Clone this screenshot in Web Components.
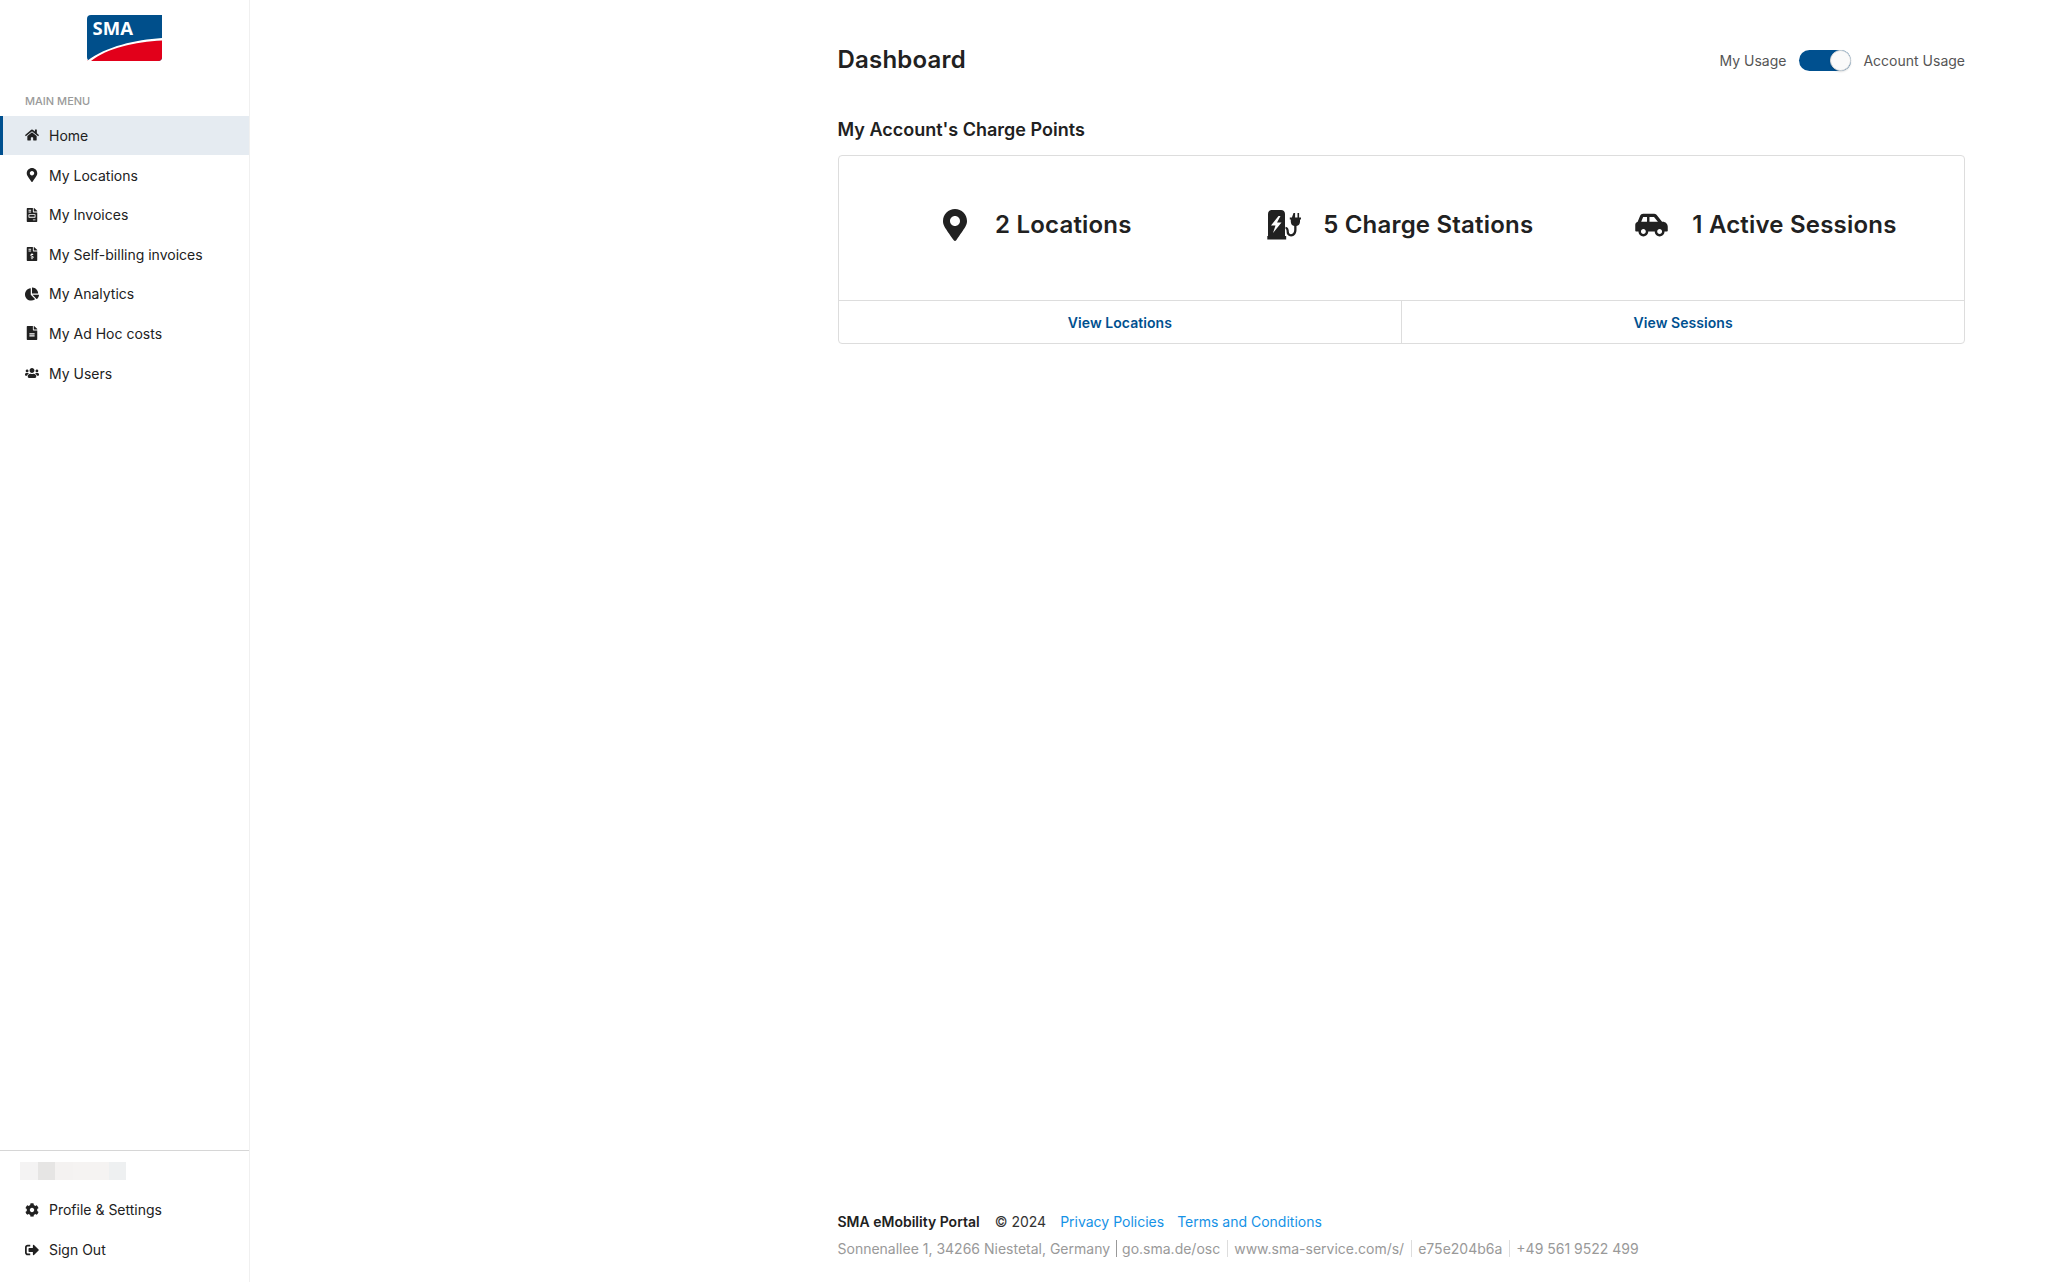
<!DOCTYPE html>
<html lang="en"><head><meta charset="utf-8"><title>Dashboard</title>
<style>
html,body{margin:0;height:100%;background:#fff}
body{font-family:Inter,"Liberation Sans",sans-serif;color:#212121}
</style></head>
<body>
<app-shell>
  <side-nav slot="nav">
    <nav-item icon="home" active>Home</nav-item>
    <nav-item icon="pin">My Locations</nav-item>
    <nav-item icon="invoice">My Invoices</nav-item>
    <nav-item icon="dollar">My Self-billing invoices</nav-item>
    <nav-item icon="pie">My Analytics</nav-item>
    <nav-item icon="adhoc">My Ad Hoc costs</nav-item>
    <nav-item icon="users">My Users</nav-item>
    <nav-item slot="bottom" icon="cog">Profile &amp; Settings</nav-item>
    <nav-item slot="bottom" icon="out">Sign Out</nav-item>
  </side-nav>
  <page-header>Dashboard</page-header>
  <stats-card heading="My Account's Charge Points"></stats-card>
  <page-footer slot="footer"></page-footer>
</app-shell>
<script>
const ICONS={
home:['0 0 576 512','M280.37 148.26L96 300.11V464a16 16 0 0 0 16 16l112.06-.29a16 16 0 0 0 15.92-16V368a16 16 0 0 1 16-16h64a16 16 0 0 1 16 16v95.64a16 16 0 0 0 16 16.05L464 480a16 16 0 0 0 16-16V300L295.67 148.26a12.19 12.19 0 0 0-15.3 0zM571.6 251.47L488 182.56V44.05a12 12 0 0 0-12-12h-56a12 12 0 0 0-12 12v72.61L318.47 43a48 48 0 0 0-61 0L4.34 251.47a12 12 0 0 0-1.6 16.9l25.5 31A12 12 0 0 0 45.15 301l235.22-193.74a12.19 12.19 0 0 1 15.3 0L530.9 301a12 12 0 0 0 16.9-1.6l25.5-31a12 12 0 0 0-1.7-16.93z'],
pin:['0 0 384 512','M172.268 501.67C26.97 291.031 0 262.559 0 192 0 85.961 85.961 0 192 0s192 85.961 192 192c0 70.559-26.97 99.031-172.268 309.67-9.535 13.774-29.93 13.773-39.464 0zM192 272c44.183 0 80-35.817 80-80s-35.817-80-80-80-80 35.817-80 80 35.817 80 80 80z'],
invoice:['0 0 384 512','M288 256H96v64h192v-64zm89-151L279.1 7c-4.5-4.5-10.6-7-17-7H256v128h128v-6.1c0-6.3-2.5-12.4-7-16.9zm-153 31V0H24C10.7 0 0 10.7 0 24v464c0 13.3 10.7 24 24 24h336c13.3 0 24-10.7 24-24V160H248c-13.2 0-24-10.8-24-24zM64 72c0-4.42 3.58-8 8-8h80c4.42 0 8 3.58 8 8v16c0 4.42-3.58 8-8 8H72c-4.42 0-8-3.58-8-8V72zm0 64c0-4.42 3.58-8 8-8h80c4.42 0 8 3.58 8 8v16c0 4.42-3.58 8-8 8H72c-4.42 0-8-3.58-8-8v-16zm256 304c0 4.42-3.58 8-8 8h-80c-4.42 0-8-3.58-8-8v-16c0-4.42 3.58-8 8-8h80c4.42 0 8 3.58 8 8v16zm0-200v96c0 8.84-7.16 16-16 16H80c-8.84 0-16-7.16-16-16v-96c0-8.84 7.16-16 16-16h224c8.84 0 16 7.16 16 16z'],
dollar:['0 0 384 512','M377 105L279.1 7c-4.5-4.5-10.6-7-17-7H256v128h128v-6.1c0-6.3-2.5-12.4-7-16.9zm-153 31V0H24C10.7 0 0 10.7 0 24v464c0 13.3 10.7 24 24 24h336c13.3 0 24-10.7 24-24V160H248c-13.2 0-24-10.8-24-24zM64 72c0-4.42 3.58-8 8-8h80c4.42 0 8 3.58 8 8v16c0 4.42-3.58 8-8 8H72c-4.42 0-8-3.58-8-8V72zm0 80v-16c0-4.42 3.58-8 8-8h80c4.42 0 8 3.58 8 8v16c0 4.42-3.58 8-8 8H72c-4.42 0-8-3.58-8-8zm144 263.88V440c0 4.42-3.58 8-8 8h-16c-4.42 0-8-3.58-8-8v-24.29c-11.29-.58-22.27-4.52-31.37-11.35-3.9-2.93-4.1-8.77-.57-12.14l11.75-11.21c2.77-2.64 6.89-2.76 10.13-.73 3.87 2.42 8.26 3.72 12.82 3.72h28.11c6.5 0 11.8-5.92 11.8-13.19 0-5.95-3.61-11.19-8.77-12.73l-45-13.5c-18.59-5.58-31.58-23.42-31.58-43.39 0-24.52 19.05-44.44 42.67-45.07V232c0-4.42 3.58-8 8-8h16c4.42 0 8 3.58 8 8v24.29c11.29.58 22.27 4.51 31.37 11.35 3.9 2.93 4.1 8.77.57 12.14l-11.75 11.21c-2.77 2.64-6.89 2.76-10.13.73-3.87-2.43-8.26-3.72-12.82-3.72h-28.11c-6.5 0-11.8 5.92-11.8 13.19 0 5.95 3.61 11.19 8.77 12.73l45 13.5c18.59 5.58 31.58 23.42 31.58 43.39 0 24.53-19.05 44.44-42.67 45.07z'],
pie:['0 0 544 512','M527.79 288H290.5l158.03 158.03c6.04 6.04 15.98 6.53 22.19.68 38.7-36.46 65.32-85.61 73.13-140.86 1.34-9.46-6.51-17.85-16.06-17.85zm-15.83-64.8C503.72 103.74 408.26 8.28 288.8.04 279.68-.59 272 7.1 272 16.24V240h223.77c9.14 0 16.82-7.68 16.19-16.8zM224 288V50.71c0-9.55-8.39-17.4-17.84-16.06C86.99 51.49-4.1 155.6.14 280.37 4.5 408.51 114.83 513.59 243.03 511.98c50.4-.63 96.97-16.87 135.26-44.03 7.9-5.6 8.42-17.23 1.57-24.08L224 288z'],
adhoc:['0 0 384 512','M224 136V0H24C10.7 0 0 10.7 0 24v464c0 13.3 10.7 24 24 24h336c13.3 0 24-10.7 24-24V160H248c-13.2 0-24-10.8-24-24zm64 236c0 6.6-5.4 12-12 12H108c-6.6 0-12-5.4-12-12v-24c0-6.6 5.4-12 12-12h168c6.6 0 12 5.4 12 12v24zm0-96v24c0 6.6-5.4 12-12 12H108c-6.6 0-12-5.4-12-12v-24c0-6.6 5.4-12 12-12h168c6.6 0 12 5.4 12 12zm96-154.1v6.1H256V0h6.1c6.4 0 12.5 2.5 17 7l97.9 98c4.5 4.5 7 10.6 7 16.9z'],
users:['0 0 640 512','M96 224c35.3 0 64-28.7 64-64s-28.7-64-64-64-64 28.7-64 64 28.7 64 64 64zm448 0c35.3 0 64-28.7 64-64s-28.7-64-64-64-64 28.7-64 64 28.7 64 64 64zm32 32h-64c-17.6 0-33.5 7.1-45.1 18.6 40.3 22.1 68.9 62 75.1 109.4h66c17.7 0 32-14.3 32-32v-32c0-35.3-28.7-64-64-64zm-256 0c61.9 0 112-50.1 112-112S381.9 32 320 32 208 82.1 208 144s50.1 112 112 112zm76.8 32h-8.3c-20.8 10-43.9 16-68.5 16s-47.6-6-68.5-16h-8.3C179.6 288 128 339.6 128 403.2V432c0 26.5 21.5 48 48 48h288c26.5 0 48-21.5 48-48v-28.8c0-63.6-51.6-115.2-115.2-115.2zm-223.7-13.4C161.5 263.1 145.6 256 128 256H64c-35.3 0-64 28.7-64 64v32c0 17.7 14.3 32 32 32h65.9c6.3-47.4 34.9-87.3 75.2-109.4z'],
cog:['0 0 512 512','M487.4 315.7l-42.6-24.6c4.3-23.2 4.3-47 0-70.2l42.6-24.6c4.9-2.8 7.1-8.6 5.5-14-11.1-35.6-30-67.8-54.7-94.6-3.8-4.1-10-5.1-14.8-2.3L380.8 110c-17.9-15.4-38.5-27.3-60.8-35.1V25.8c0-5.6-3.9-10.5-9.4-11.7-36.7-8.2-74.3-7.8-109.2 0-5.5 1.2-9.4 6.1-9.4 11.7V75c-22.2 7.9-42.8 19.8-60.8 35.1L88.7 85.5c-4.9-2.8-11-1.9-14.8 2.3-24.7 26.7-43.6 58.9-54.7 94.6-1.7 5.4.6 11.2 5.5 14L67.3 221c-4.3 23.2-4.3 47 0 70.2l-42.6 24.6c-4.9 2.8-7.1 8.6-5.5 14 11.1 35.6 30 67.8 54.7 94.6 3.8 4.1 10 5.1 14.8 2.3l42.6-24.6c17.9 15.4 38.5 27.3 60.8 35.1v49.2c0 5.6 3.9 10.5 9.4 11.7 36.7 8.2 74.3 7.8 109.2 0 5.5-1.2 9.4-6.1 9.4-11.7v-49.2c22.2-7.9 42.8-19.8 60.8-35.1l42.6 24.6c4.9 2.8 11 1.9 14.8-2.3 24.7-26.7 43.6-58.9 54.7-94.6 1.5-5.5-.7-11.3-5.6-14.1zM256 336c-44.1 0-80-35.9-80-80s35.9-80 80-80 80 35.9 80 80-35.9 80-80 80z'],
out:['0 0 512 512','M497 273L329 441c-15 15-41 4.5-41-17v-96H152c-13.3 0-24-10.7-24-24v-96c0-13.3 10.7-24 24-24h136V88c0-21.4 25.9-32 41-17l168 168c9.3 9.4 9.3 24.6 0 34zM192 436v-40c0-6.6-5.4-12-12-12H96c-17.7 0-32-14.3-32-32V160c0-17.7 14.3-32 32-32h84c6.6 0 12-5.4 12-12V76c0-6.6-5.4-12-12-12H96c-53 0-96 43-96 96v192c0 53 43 96 96 96h84c6.6 0 12-5.4 12-12z'],
car:['0 0 640 512','M544 192h-16L419.22 56.02A64.025 64.025 0 0 0 369.24 32H155.33c-26.17 0-49.7 15.93-59.42 40.23L48 194.26C20.44 201.4 0 226.21 0 256v112c0 8.84 7.16 16 16 16h48c0 53.02 42.98 96 96 96s96-42.98 96-96h128c0 53.02 42.98 96 96 96s96-42.98 96-96h48c8.84 0 16-7.16 16-16v-80c0-53.02-42.98-96-96-96zM160 432c-26.47 0-48-21.53-48-48s21.53-48 48-48 48 21.53 48 48-21.53 48-48 48zm72-240H116.93l38.4-96H232v96zm48 0V96h89.24l76.8 96H280zm200 240c-26.47 0-48-21.53-48-48s21.53-48 48-48 48 21.53 48 48-21.53 48-48 48z'],
charger:['0 0 34 30','M5 0h9c2.400 0 4 1.600 4 4v22h1.200v3.500H.300V26H1V4c0-2.400 1.600-4 4-4zM11.500 6 4 15.500H8.500L6 23 14.500 12.500H10L13.500 6zM26.500 3h1.600v4.500h2.400V3h1.600v4.500H34v2h-1v2.200c0 2.300-1.500 4-3.500 4.400V20c0 3-1.900 6.500-5.500 6.500-2.900 0-4.400-2-4.400-4.400 0-1.500-.1-3.100-1.100-3.100v-2.300c2.300 0 3.400 2.300 3.400 5.300 0 1.200.7 2.200 2.100 2.200 2.100 0 3.200-2.200 3.200-4.200v-3.900c-2-.4-3.400-2.100-3.400-4.400V9.500h-1v-2h2.100z']
};
const def=(n,css,html)=>customElements.define(n,class extends HTMLElement{
  constructor(){super();this.attachShadow({mode:'open'}).innerHTML=`<style>${css}</style>${html}`;}
});
customElements.define('app-icon',class extends HTMLElement{
  constructor(){super();this.attachShadow({mode:'open'});}
  connectedCallback(){const [vb,d]=ICONS[this.getAttribute('name')];const w=this.getAttribute('w')||16,h=this.getAttribute('h')||14;
    this.shadowRoot.innerHTML=`<style>:host{display:inline-flex;align-items:center;justify-content:center}svg{display:block;fill:currentColor}</style><svg width="${w}" height="${h}" viewBox="${vb}"><path fill-rule="evenodd" d="${d}"/></svg>`;}
});
def('sma-logo',`:host{display:block;width:75px;height:46px}svg{display:block}text{font:700 18.500px "Open Sans",Inter,sans-serif;fill:#fff}`,
`<svg width="75" height="46" viewBox="0 0 75 46" role="img" aria-label="SMA"><path d="M0 4a4 4 0 0 1 4-4h71v42a4 4 0 0 1-4 4H4a4 4 0 0 1-4-4z" fill="#004f8b"/><path d="M0 46C20 32 48 26 75 25V42a4 4 0 0 1-4 4z" fill="#e2001a"/><path d="M0 46C20 31 48 25 75 23v2.500C48 27 20 33 4 46H0z" fill="#fff"/><text x="5.500" y="20">SMA</text></svg>`);
def('app-shell',`:host{display:flex;min-height:100vh;height:1282px;box-sizing:border-box}
 nav{width:250px;flex:none;display:flex}
 main{flex:1;display:flex;flex-direction:column;padding:0 105px 0 587.500px;min-width:0}
 .body{flex:1}`,`<nav><slot name="nav"></slot></nav><main><div class="body"><slot></slot></div><slot name="footer"></slot></main>`);
def('side-nav',`:host{display:flex;flex-direction:column;width:250px;box-sizing:border-box;border-right:1px solid #f0f0f0;height:1282px}
 header{display:flex;justify-content:center;padding-top:15px}
 h2{font-size:11px;font-weight:500;line-height:18px;margin:31px 0 5.700px 25px;color:#9a9a9a;text-transform:uppercase}
 .grow{flex:1}
 .bottom{border-top:1px solid #d6d6d6;padding:11px 0 12.700px}
 .who{height:18px;width:106px;margin:0 0 10.300px 20px;display:flex}
 .who i{display:block;height:100%}`,
`<header><sma-logo></sma-logo></header><h2>Main Menu</h2><div class="grow"><slot></slot></div>
 <div class="bottom"><div class="who" aria-hidden="true"><i style="width:18px;background:#f4f3f3"></i><i style="width:17px;background:#e6e5e4"></i><i style="width:18px;background:#f4f2f1"></i><i style="width:36px;background:#f5f3f2"></i><i style="width:17px;background:#eef0f1"></i></div><slot name="bottom"></slot></div>`);
customElements.define('nav-item',class extends HTMLElement{
  constructor(){super();this.attachShadow({mode:'open'});}
  connectedCallback(){
    this.shadowRoot.innerHTML=`<style>:host{display:flex;align-items:center;height:39.600px;box-sizing:border-box;padding-left:25px;font-size:14px;color:#212121;gap:10px}
    :host([active]){background:#e5ebf1;box-shadow:inset 3px 0 0 #00508f}
    app-icon{width:14px;flex:none}</style><app-icon name="${this.getAttribute('icon')}" w="14" h="14"></app-icon><span><slot></slot></span>`;
  }
});
def('page-header',`:host{display:block}
 .row{display:flex;align-items:center;justify-content:space-between;height:120px;margin-bottom:-4px}
 h1{font-size:24px;font-weight:600;margin:0;line-height:36px;letter-spacing:.2px}
 .tog{display:flex;align-items:center;font-size:14px;color:#555}
 .sw{width:52px;height:21px;border-radius:11px;background:#00508f;position:relative;margin:0 12px 0 13px}
 .sw::after{content:"";position:absolute;right:0;top:0;width:21px;height:21px;box-sizing:border-box;border-radius:50%;background:#fafafa;border:1px solid #ddd;box-shadow:0 1px 2px rgba(0,0,0,.15)}`,
`<div class="row"><h1><slot></slot></h1><div class="tog"><span>My Usage</span><span class="sw" role="switch" aria-checked="true"></span><span>Account Usage</span></div></div>`);
customElements.define('stats-card',class extends HTMLElement{
  constructor(){super();this.attachShadow({mode:'open'});}
  connectedCallback(){
    this.shadowRoot.innerHTML=`<style>:host{display:block}
    h2{font-size:18px;font-weight:600;line-height:27px;margin:0 0 12px}
    .card{border:1px solid #ddd;border-radius:4px;height:189px;box-sizing:border-box;display:flex;flex-direction:column}
    .stats{height:144px;display:flex;align-items:center;padding:0 0 0 104px;box-sizing:border-box}
    .stat{display:flex;align-items:center;font-size:24px;font-weight:600;line-height:36px;letter-spacing:.2px;position:relative;top:-3px}
    .stat app-icon{flex:none}
    .actions{flex:1;display:grid;grid-template-columns:1fr 1fr;border-top:1px solid #ddd}
    a{display:flex;align-items:center;justify-content:center;color:#00508f;font-size:14px;font-weight:600;letter-spacing:.05px;text-decoration:none}
    a+a{border-left:1px solid #ddd}</style>
    <h2>${this.getAttribute('heading')}</h2>
    <div class="card"><div class="stats">
      <div class="stat" style="gap:28.500px;margin-right:135.500px"><app-icon name="pin" w="24" h="32"></app-icon><span>2 Locations</span></div>
      <div class="stat" style="gap:22px;margin-right:102px"><app-icon name="charger" w="34" h="30"></app-icon><span>5 Charge Stations</span></div>
      <div class="stat" style="gap:24px"><app-icon name="car" w="33" h="26"></app-icon><span>1 Active Sessions</span></div>
    </div><div class="actions"><a href="#">View Locations</a><a href="#">View Sessions</a></div></div>`;
  }
});
def('page-footer',`:host{display:block;font-size:14px;line-height:27px;padding-bottom:20px;color:#333}
 .l1{display:flex;gap:14px}
 b{font-weight:600;color:#212121;margin-right:1px}
 a{color:#1592e6;text-decoration:none}
 a+a{margin-left:-1px}
 .l2{display:flex;color:#999}
 .l2 span+span{border-left:1px solid #ddd;margin-left:6.500px;padding-left:6.500px;align-self:center;line-height:17px}
 .l2 span.hard{border-left-color:#999;margin-left:5.500px;padding-left:5.500px}`,
`<div class="l1"><b>SMA eMobility Portal</b><span>© 2024</span><a href="#">Privacy Policies</a><a href="#">Terms and Conditions</a></div>
 <div class="l2"><span>Sonnenallee 1, 34266 Niestetal, Germany</span><span class="hard">go.sma.de/osc</span><span>www.sma-service.com/s/</span><span>e75e204b6a</span><span>+49 561 9522 499</span></div>`);
</script>
</body></html>
